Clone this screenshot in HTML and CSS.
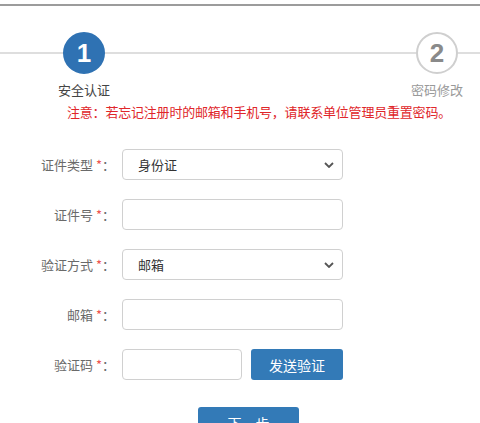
FILE: index.html
```html
<!DOCTYPE html>
<html lang="zh-CN">

<head>
    <meta charset="UTF-8">
    <meta name="viewport" content="width=device-width, initial-scale=1.0">
    <title>找回密码</title>
    <link rel="stylesheet" href="styles.css">
</head>

<body>
    <div class="topbar"></div>

    <div class="steps">
        <div class="step step-active">
            <div class="step-num">1</div>
            <div class="step-label">安全认证</div>
        </div>
        <div class="step">
            <div class="step-num">2</div>
            <div class="step-label">密码修改</div>
        </div>
    </div>

    <p class="notice">注意：若忘记注册时的邮箱和手机号，请联系单位管理员重置密码。</p>

    <form class="reset-form" id="reset-form">
        <div class="form-row">
            <label for="id-type">证件类型 <span class="req">*</span>：</label>
            <div class="select-wrap">
                <select id="id-type">
                    <option>身份证</option>
                    <option>护照</option>
                </select>
                <svg class="chevron" width="10" height="6" viewBox="0 0 10 6">
                    <path d="M1 1 L5 5 L9 1" fill="none" stroke="#555" stroke-width="1.8" />
                </svg>
            </div>
        </div>

        <div class="form-row">
            <label for="id-no">证件号 <span class="req">*</span>：</label>
            <input type="text" id="id-no">
        </div>

        <div class="form-row">
            <label for="verify-way">验证方式 <span class="req">*</span>：</label>
            <div class="select-wrap">
                <select id="verify-way">
                    <option>邮箱</option>
                    <option>手机号</option>
                </select>
                <svg class="chevron" width="10" height="6" viewBox="0 0 10 6">
                    <path d="M1 1 L5 5 L9 1" fill="none" stroke="#555" stroke-width="1.8" />
                </svg>
            </div>
        </div>

        <div class="form-row">
            <label for="email">邮箱 <span class="req">*</span>：</label>
            <input type="text" id="email">
        </div>

        <div class="form-row">
            <label for="code">验证码 <span class="req">*</span>：</label>
            <input type="text" id="code" class="input-short">
            <button type="button" class="btn btn-send">发送验证</button>
        </div>

        <div class="form-actions">
            <button type="submit" class="btn btn-next">下一步</button>
        </div>
    </form>
</body>

</html>
```

FILE: styles.css
```css
body {
    margin: 0;
    font-family: "Noto Sans CJK SC", "Liberation Sans", sans-serif;
    font-size: 13px;
    color: #333;
    background: #fff;
}

.topbar {
    margin-top: 4px;
    height: 2px;
    background: #9c9c9c;
}

.steps {
    display: flex;
    justify-content: space-between;
    margin-top: 26px;
    padding: 0 13px 0 54px;
    background: linear-gradient(#dedede, #dedede) 0 20px / 100% 2px no-repeat;
}

.step {
    width: 60px;
    text-align: center;
}

.step-num {
    width: 42px;
    height: 42px;
    margin: 0 auto;
    box-sizing: border-box;
    border-radius: 50%;
    border: 2px solid #cfcfcf;
    background: #fff;
    color: #8a8a8a;
    font-family: "Liberation Sans", sans-serif;
    font-weight: bold;
    font-size: 26px;
    line-height: 38px;
}

.step-active .step-num {
    border-color: #2f72b3;
    background: #2f72b3;
    color: #fff;
}

.step-label {
    margin-top: 7px;
    line-height: 18px;
    color: #999;
}

.step-active .step-label {
    color: #444;
}

.notice {
    margin: 4px 0 0;
    padding-left: 67px;
    line-height: 18px;
    letter-spacing: -0.2px;
    color: #e0262a;
}

.reset-form {
    margin-top: 28px;
}

.form-row {
    display: flex;
    align-items: center;
    margin-bottom: 19px;
}

.form-row label {
    width: 115px;
    margin-right: 7px;
    text-align: right;
    color: #6a6a6a;
    line-height: 18px;
}

.req {
    color: #ee5550;
}

.select-wrap {
    position: relative;
}

select,
input[type="text"] {
    box-sizing: border-box;
    width: 221px;
    height: 31px;
    padding: 0 15px;
    border: 1px solid #d0d0d0;
    border-radius: 4px;
    background: #fff;
    font-family: inherit;
    font-size: 13px;
    color: #333;
    outline: none;
}

select {
    appearance: none;
    -webkit-appearance: none;
}

.chevron {
    position: absolute;
    right: 9px;
    top: 13px;
    pointer-events: none;
}

input.input-short {
    width: 120px;
}

.btn {
    box-sizing: border-box;
    height: 31px;
    border: none;
    border-radius: 3px;
    background: #337ab7;
    color: #fff;
    font-family: inherit;
    font-size: 14px;
    cursor: pointer;
}

.btn-send {
    width: 92px;
    margin-left: 9px;
}

.form-actions {
    padding: 8px 0 0 198px;
}

.btn-next {
    width: 101px;
    height: 32px;
}
```
